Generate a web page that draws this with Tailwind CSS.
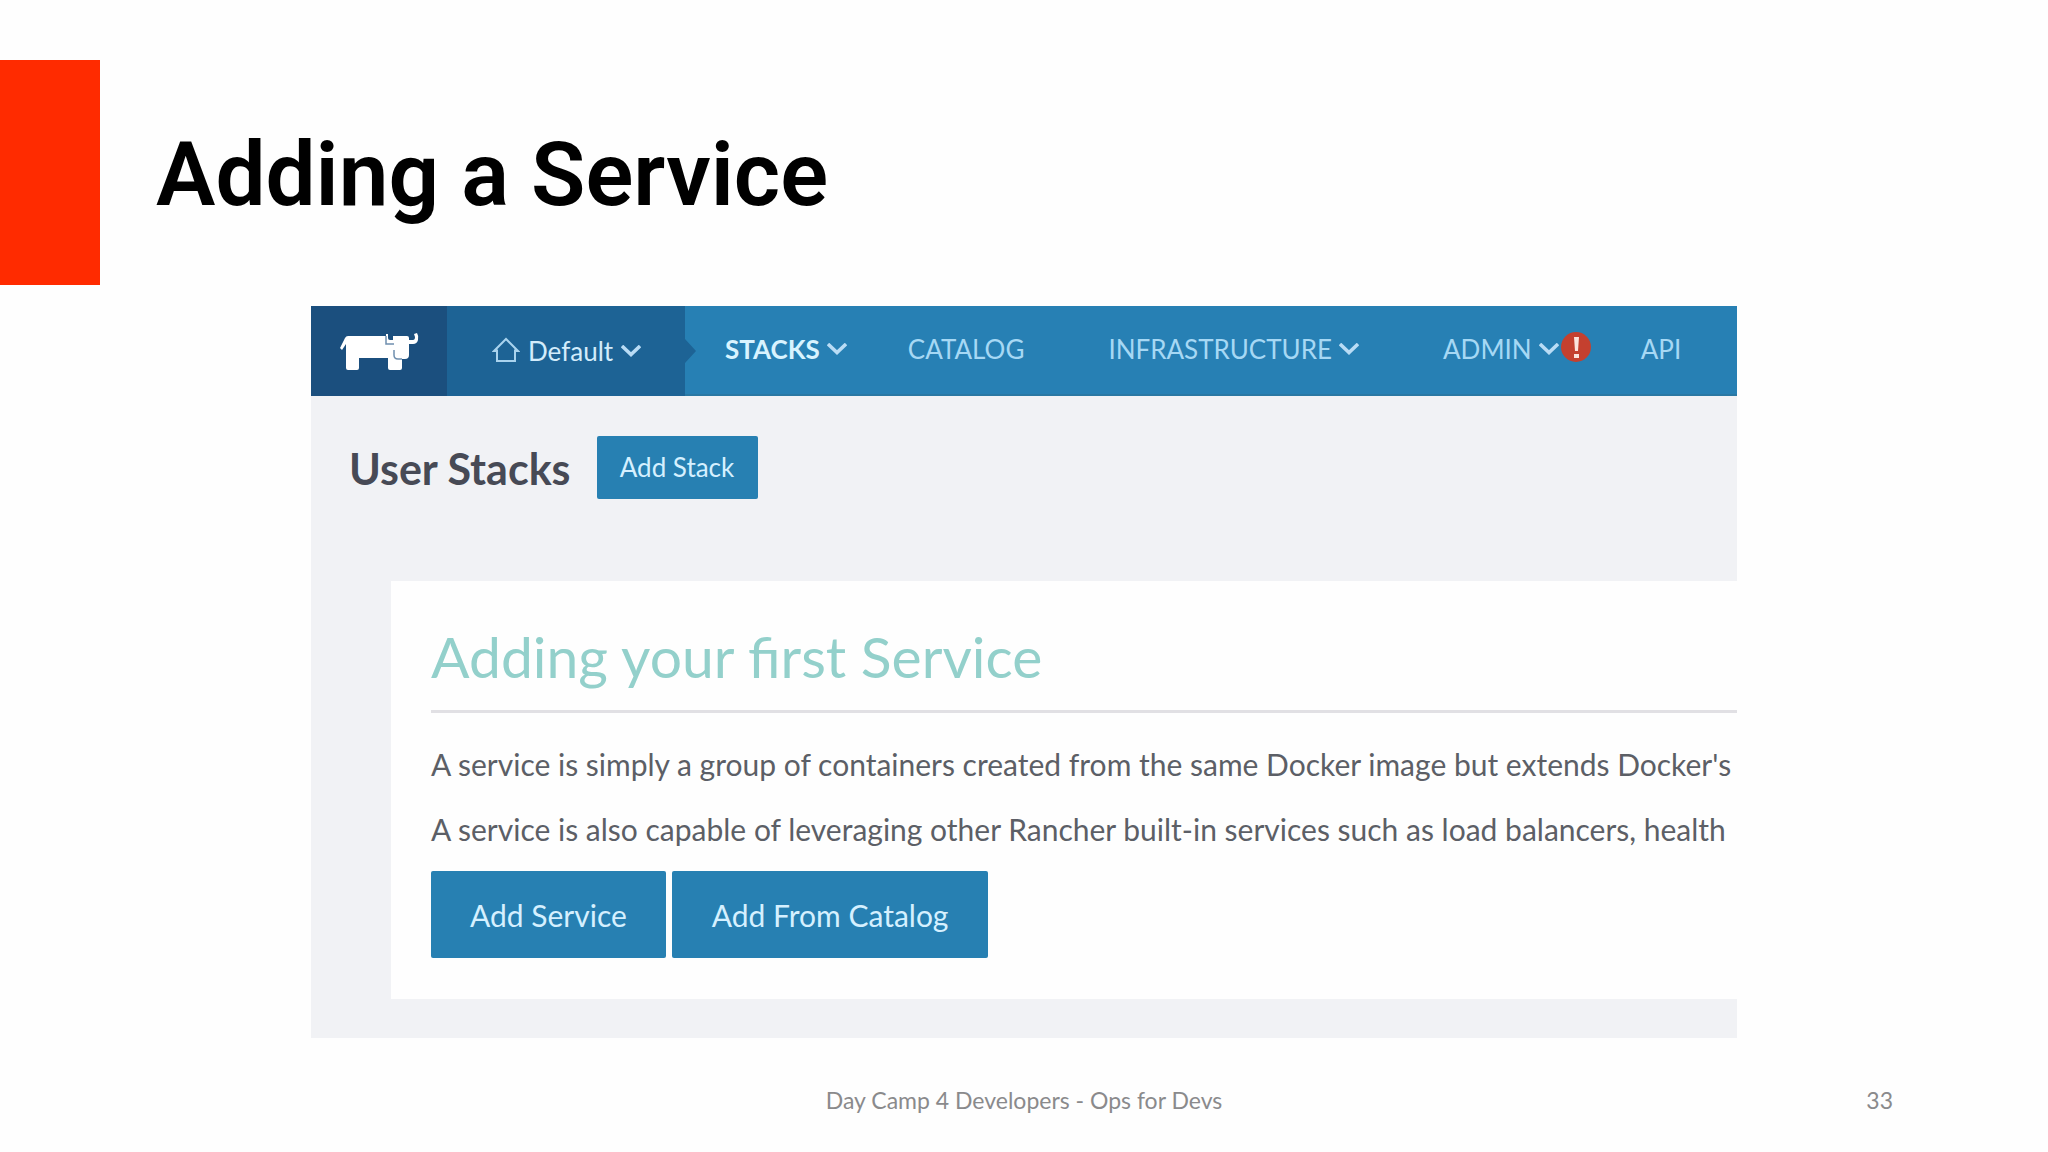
<!DOCTYPE html>
<html lang="en">
<head>
    <meta charset="UTF-8">
    <meta name="viewport" content="width=device-width, initial-scale=1.0">
    <title>Adding a Service</title>
    <script src="https://cdn.jsdelivr.net/npm/@tailwindcss/browser@4"></script>
</head>
<body class="bg-[#fefefe] min-h-screen flex flex-col font-['Lato',sans-serif] overflow-x-hidden">
    <!-- Slide title -->
    <header class="flex items-center mt-[60px] mb-[21px]">
        <div class="w-[100px] h-[225px] bg-[#ff2b00]"></div>
        <h1 class="pl-14 pt-1 text-[89px] leading-none font-semibold text-black font-['Roboto',sans-serif]">Adding a Service</h1>
    </header>

    <!-- Rancher screen -->
    <main class="w-full max-w-[1426px] mx-auto bg-[#f1f2f5] overflow-hidden">
        <nav class="flex h-[90px] bg-[#2780b4] border-b-2 border-[#2a78a3] text-[26px] text-[#a6d8f4] whitespace-nowrap">
            <a href="#" aria-label="Rancher" class="w-[136px] h-[90px] shrink-0 bg-[#1b4f7e] flex items-center justify-center">
                <svg class="w-20 h-10" viewBox="0 0 80 40" fill="none">
                    <path fill="#fff" d="M9 5H47V3L49 3V7Q49 9 51 9H54V5H68Q70 5 70 7V9H74Q76 9 76 6L75 3L78 2Q80 5 79 9Q78 13 74 13H70V24Q70 28 66 28H63V37Q63 39 61 39H51Q49 39 49 37V27H20V37Q20 39 18 39H9Q7 39 7 37V13L3 19L1 17L6 7Q7 5 9 5Z" />
                    <path stroke="#6f8fae" stroke-width="1.5" d="M47 5V13H55M55 19V24Q55 28 59 28H63" />
                </svg>
            </a>
            <div class="relative w-[238px] h-[90px] shrink-0 bg-[#1d6395]">
                <button type="button" class="w-full h-full pl-[45px] flex items-center text-[#d3ecfb]">
                    <svg class="w-7 h-7 mr-2" viewBox="0 0 28 28" fill="none" stroke="#a9d3ee" stroke-width="2">
                        <path d="M5 12.500V24H23V12.500M5 14H2L14 2L26 14H23" />
                    </svg>
                    Default
                    <svg class="w-5 h-3 ml-2" viewBox="0 0 20 12" fill="none" stroke="#b9dcf5" stroke-width="3.500">
                        <path d="M1 1L10 9.500L19 1" />
                    </svg>
                </button>
                <svg class="absolute left-full top-[33px] w-[11px] h-6" viewBox="0 0 11 24">
                    <path fill="#1d6395" d="M0 0L11 12L0 24Z" />
                </svg>
            </div>
            <div class="flex items-center h-[86px] pl-10">
                <button type="button" class="flex items-center mr-[61px] font-bold text-[#d8f3ff]">
                    STACKS
                    <svg class="w-5 h-3 ml-[7px]" viewBox="0 0 20 12" fill="none" stroke="#b9dcf5" stroke-width="3.500">
                        <path d="M1 1L10 9.500L19 1" />
                    </svg>
                </button>
                <a href="#" class="mr-[84px]">CATALOG</a>
                <button type="button" class="flex items-center mr-[84px]">
                    INFRASTRUCTURE
                    <svg class="w-5 h-3 ml-[7px]" viewBox="0 0 20 12" fill="none" stroke="#b9dcf5" stroke-width="3.500">
                        <path d="M1 1L10 9.500L19 1" />
                    </svg>
                </button>
                <button type="button" class="flex items-center mr-[50px]">
                    ADMIN
                    <svg class="w-5 h-3 ml-[7px]" viewBox="0 0 20 12" fill="none" stroke="#b9dcf5" stroke-width="3.500">
                        <path d="M1 1L10 9.500L19 1" />
                    </svg>
                    <svg class="w-[30px] h-[30px] ml-0.5 mb-1" viewBox="0 0 30 30">
                        <circle cx="15" cy="15" r="15" fill="#c4402f" />
                        <path fill="#fbe3dc" d="M13 5H18L17 19H14ZM13 22H18V26H13Z" />
                    </svg>
                </button>
                <a href="#">API</a>
            </div>
        </nav>

        <div class="flex items-center gap-[26px] pt-10 pl-[38px]">
            <h2 class="pt-0.5 text-[43px] leading-none font-bold text-[#474a55]">User Stacks</h2>
            <button type="button" class="w-[161px] h-[63px] rounded-xs bg-[#2780b2] text-[26px] text-[#d5f0ff]">Add Stack</button>
        </div>

        <section class="mt-[82px] mb-[39px] ml-20 pl-10 py-[41px] bg-[#fefefe] whitespace-nowrap text-[30px] leading-9 text-[#5c5f66]">
            <h3 class="pb-5 border-b-3 border-[#e1e0e4] text-[57px] leading-[68px] text-[#93d0cb]">Adding your first Service</h3>
            <p class="mt-[33px]">A service is simply a group of containers created from the same Docker image but extends Docker's</p>
            <p class="mt-[29px]">A service is also capable of leveraging other Rancher built-in services such as load balancers, health</p>
            <div class="flex gap-1.5 mt-6 text-[#d5f0ff]">
                <button type="button" class="h-[87px] px-[39px] rounded-xs bg-[#2780b2]">Add Service</button>
                <button type="button" class="h-[87px] px-10 rounded-xs bg-[#2780b2]">Add From Catalog</button>
            </div>
        </section>
    </main>

    <!-- Slide footer -->
    <footer class="grid grid-cols-[1fr_auto_1fr] items-center h-[124px] px-[155px] text-[23px] text-[#8a8a8c]">
        <p class="col-start-2">Day Camp 4 Developers - Ops for Devs</p>
        <p class="text-right">33</p>
    </footer>
</body>
</html>
